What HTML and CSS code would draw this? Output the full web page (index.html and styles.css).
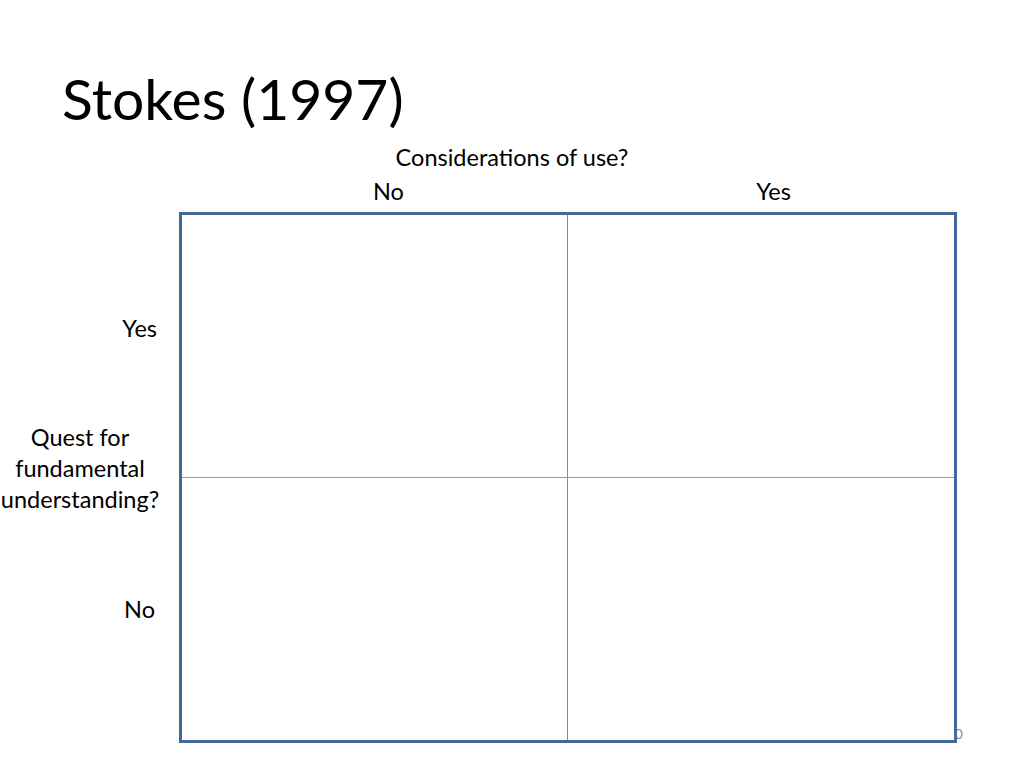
FILE: index.html
```html
<!DOCTYPE html>
<html>
<head>
<meta charset="utf-8">
<link rel="stylesheet" href="styles.css">
</head>
<body>
<div class="slide">
  <h1 class="title">Stokes (1997)</h1>
  <div class="matrix">
    <div class="top-caption">Considerations of use?</div>
    <div class="col-label col-no">No</div>
    <div class="col-label col-yes">Yes</div>
    <div class="side">
      <div class="row-label row-yes">Yes</div>
      <div class="side-caption">Quest for<br>fundamental<br>understanding?</div>
      <div class="row-label row-no">No</div>
    </div>
    <div class="box-wrap">
      <span class="page-num">10</span>
      <div class="box">
        <div class="cell c1"></div>
        <div class="cell c2"></div>
        <div class="cell c3"></div>
        <div class="cell c4"></div>
      </div>
    </div>
  </div>
</div>
</body>
</html>
```

FILE: styles.css
```css
html, body {
  margin: 0;
  padding: 0;
  background: #ffffff;
}
.slide {
  width: 1024px;
  height: 768px;
  position: relative;
  overflow: hidden;
  font-family: Lato, "Open Sans", sans-serif;
  color: #000;
}
.title {
  margin: 0;
  padding: 66px 0 0 62px;
  height: 74px;
  font-weight: normal;
  font-size: 57px;
  line-height: 64px;
}
.matrix {
  display: grid;
  grid-template-columns: 179px 389px 389px 67px;
  grid-template-rows: 36px 36px 531px;
}
.top-caption {
  grid-column: 1 / 5;
  grid-row: 1;
  text-align: center;
  font-size: 23.5px;
  line-height: 34px;
}
.col-label {
  grid-row: 2;
  font-size: 23.5px;
  line-height: 30px;
  text-align: center;
}
.col-no { grid-column: 2; padding-left: 30px; }
.col-yes { grid-column: 3; padding-left: 22px; }
.side {
  grid-column: 1;
  grid-row: 3;
  display: flex;
  flex-direction: column;
  font-size: 23.5px;
}
.row-label {
  text-align: right;
  padding-right: 22px;
  line-height: 30px;
}
.row-yes { margin-top: 101px; }
.side-caption {
  margin-top: 79px;
  text-align: center;
  line-height: 31px;
  width: 160px;
}
.row-no { margin-top: 79px; padding-right: 24px; }
.box-wrap {
  grid-column: 2 / 4;
  grid-row: 3;
  position: relative;
}
.page-num {
  position: absolute;
  right: -6px;
  top: 513px;
  font-size: 14px;
  color: #8b8b8b;
  z-index: 0;
}
.box {
  position: relative;
  z-index: 1;
  background: #ffffff;
  box-sizing: border-box;
  width: 778px;
  height: 531px;
  border: 3px solid #45689a;
  display: grid;
  grid-template-columns: 386px 1fr;
  grid-template-rows: 263px 1fr;
}
.c1 { border-right: 1px solid #6d8fbc; border-bottom: 1px solid #7e9cc4; }
.c2 { border-bottom: 1px solid #7e9cc4; }
.c3 { border-right: 1px solid #6d8fbc; }
```
